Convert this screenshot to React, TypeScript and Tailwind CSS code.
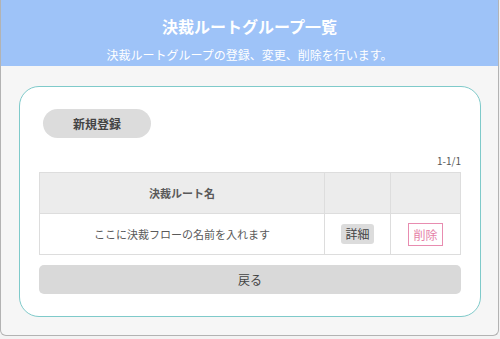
export default function App() {
  const font = { fontFamily: '"Noto Sans CJK JP", "Noto Sans", sans-serif' }
  return (
    <div className="w-[500px] h-[339px] bg-[#f3f3f3]" style={font}>
      <div className="w-[499px] h-[336px] border-x border-b border-[#b3b3b3] rounded-b-[6px] bg-[#f6f6f6] overflow-hidden flex flex-col">
        {/* header */}
        <div className="h-[66px] bg-[#9ec3f8] flex flex-col items-center text-white">
          <div className="mt-[13px] text-[16px] font-bold leading-[26px]">決裁ルートグループ一覧</div>
          <div className="mt-[8px] text-[12px] leading-[16px]">決裁ルートグループの登録、変更、削除を行います。</div>
        </div>

        {/* card */}
        <div className="ml-[18px] mt-[20px] w-[462px] h-[231px] bg-white border border-[#7fcaca] rounded-[20px] px-[19px] pt-[22px]">
          <button className="ml-[4px] w-[108px] h-[29px] rounded-full bg-[#dcdcdc] text-[12px] font-bold text-[#444]">
            新規登録
          </button>
          <div className="mt-[16px] mb-[4px] h-[14px] text-right text-[10px] leading-[14px] text-[#555]">1-1/1</div>

          <table className="w-[422px] border-collapse text-[11px] text-[#5a5a5a]">
            <thead>
              <tr className="h-[41px] bg-[#ececec]">
                <th className="w-[286px] border border-[#dddddd] font-bold">決裁ルート名</th>
                <th className="w-[66px] border border-[#dddddd]"></th>
                <th className="w-[70px] border border-[#dddddd]"></th>
              </tr>
            </thead>
            <tbody>
              <tr className="h-[41px]">
                <td className="border border-[#dddddd] text-center">ここに決裁フローの名前を入れます</td>
                <td className="border border-[#dddddd] text-center">
                  <span className="inline-block w-[33px] h-[20px] leading-[20px] rounded-[3px] bg-[#dcdcdc] text-[12px] text-[#444]">詳細</span>
                </td>
                <td className="border border-[#dddddd] text-center">
                  <span className="inline-block w-[35px] h-[23px] leading-[21px] border border-[#e88cb0] text-[12px] text-[#e57fa7]">削除</span>
                </td>
              </tr>
            </tbody>
          </table>

          <button className="mt-[10px] w-[422px] h-[29px] rounded-[5px] bg-[#d9d9d9] text-[12px] text-[#444]">戻る</button>
        </div>
      </div>
    </div>
  )
}
